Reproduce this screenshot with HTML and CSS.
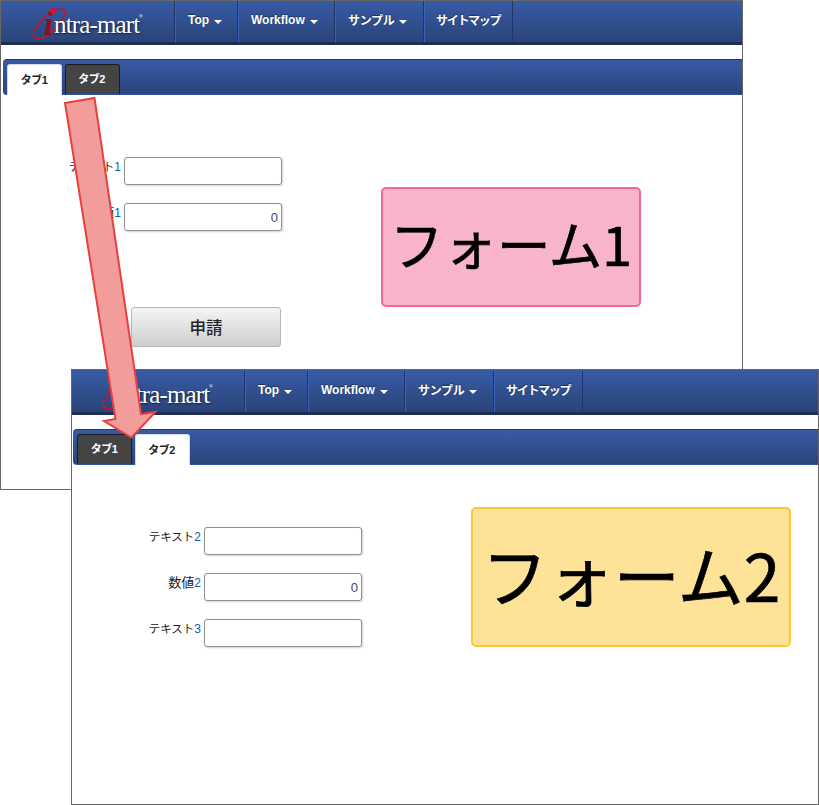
FILE: index.html
```html
<!DOCTYPE html>
<html lang="ja">
<head>
<meta charset="utf-8">
<title>タブ</title>
<link rel="stylesheet" href="styles.css">
</head>
<body>
<main class="canvas">
  <section class="window window-one">
    <header class="navbar">
      <div class="brand">
        <svg class="brand-mark" viewBox="0 0 40 40" aria-hidden="true">
          <ellipse cx="20" cy="22" rx="8" ry="20" transform="rotate(47 20 22)" fill="none" stroke="#c2162a" stroke-width="1.5"/>
          <text x="15" y="33" class="brand-i">i</text>
          <circle cx="24" cy="9" r="3" fill="#d8132a"/>
        </svg>
        <span class="brand-text">ntra-mart</span><sup class="brand-reg">®</sup>
      </div>
      <nav class="menu">
        <a class="menu-item">Top<i class="caret"></i></a>
        <a class="menu-item">Workflow<i class="caret"></i></a>
        <a class="menu-item">サンプル<i class="caret"></i></a>
        <a class="menu-item">サイトマップ</a>
      </nav>
    </header>
    <div class="tabbar">
      <a class="tab tab-active">タブ1</a>
      <a class="tab tab-dark">タブ2</a>
    </div>
    <div class="content">
      <form class="fields">
        <label class="field-label">テキスト<span class="digit">1</span></label>
        <input class="input" type="text">
        <label class="field-label field-label-kanji">数値<span class="digit">1</span></label>
        <input class="input input-num" type="text" value="0">
        <button class="submit" type="button">申請</button>
      </form>
      <div class="card card-pink">フォーム1</div>
    </div>
  </section>

  <section class="window window-two">
    <header class="navbar">
      <div class="brand">
        <svg class="brand-mark" viewBox="0 0 40 40" aria-hidden="true">
          <ellipse cx="20" cy="22" rx="8" ry="20" transform="rotate(47 20 22)" fill="none" stroke="#c2162a" stroke-width="1.5"/>
          <text x="15" y="33" class="brand-i">i</text>
          <circle cx="24" cy="9" r="3" fill="#d8132a"/>
        </svg>
        <span class="brand-text">ntra-mart</span><sup class="brand-reg">®</sup>
      </div>
      <nav class="menu">
        <a class="menu-item">Top<i class="caret"></i></a>
        <a class="menu-item">Workflow<i class="caret"></i></a>
        <a class="menu-item">サンプル<i class="caret"></i></a>
        <a class="menu-item">サイトマップ</a>
      </nav>
    </header>
    <div class="tabbar">
      <a class="tab tab-dark">タブ1</a>
      <a class="tab tab-active">タブ2</a>
    </div>
    <div class="content">
      <form class="fields">
        <label class="field-label">テキスト<span class="digit">2</span></label>
        <input class="input" type="text">
        <label class="field-label field-label-kanji">数値<span class="digit">2</span></label>
        <input class="input input-num" type="text" value="0">
        <label class="field-label">テキスト<span class="digit">3</span></label>
        <input class="input" type="text">
      </form>
      <div class="card card-yellow">フォーム2</div>
    </div>
  </section>

  <svg class="arrow" viewBox="0 0 819 805" aria-hidden="true">
    <polygon points="65,103 94.500,98 141,414 155.500,412 131.500,437.500 104,421 115.500,419" fill="#f29c9b" stroke="#e8403e" stroke-width="2" stroke-linejoin="miter"/>
  </svg>
</main>
</body>
</html>
```
FILE: styles.css
```css
* { box-sizing: border-box; }
html, body { margin: 0; padding: 0; background: #fff; }
.canvas {
  position: relative;
  width: 819px;
  height: 805px;
  overflow: hidden;
  font-family: "Noto Sans CJK JP", "Liberation Sans", sans-serif;
  color: #222;
}
.window {
  position: absolute;
  background: #fff;
  border: 1px solid #666;
  display: flex;
  flex-direction: column;
}
.window-one { left: 0; top: 0; width: 743px; height: 490px; }
.window-two { left: 71px; top: 369px; width: 748px; height: 436px; }

.navbar {
  display: flex;
  height: 44px;
  flex: none;
  background: linear-gradient(#375ba6, #2b4479);
  border-bottom: 3px solid #1f2e55;
}
.window-two .navbar { height: 45px; padding-top: 1px; }
.brand {
  width: 173px;
  flex: none;
  display: flex;
  align-items: center;
  padding-left: 28px;
}
.window-two .brand { width: 172px; padding-left: 27px; }
.brand-mark { width: 40px; height: 40px; flex: none; margin-right: -15px; }
.brand-i { font: italic 700 34px "Liberation Serif", serif; fill: #8e1020; }
.brand-text {
  font: 25px/1 "Liberation Serif", serif;
  color: #fff;
  letter-spacing: -.85px;
  text-shadow: 1px 1px 2px rgba(0,0,0,.6);
  margin-top: 5px;
}
.brand-reg { font-size: 7px; line-height: 1; color: #dfe4ef; align-self: flex-start; margin-top: 13px; }

.menu { display: flex; }
.menu-item {
  display: flex;
  align-items: center;
  padding: 0 0 4px 13px;
  font: 700 12px "Liberation Sans", "Noto Sans CJK JP", sans-serif;
  color: #fff;
  text-shadow: 0 -1px 1px rgba(0,0,0,.45);
  border-left: 1px solid #1f3468;
  box-shadow: inset 1px 0 0 #3a62b8;
}
.menu-item:nth-child(1) { width: 63px; }
.menu-item:nth-child(2) { width: 97px; }
.menu-item:nth-child(3) { width: 89px; letter-spacing: -.3px; }
.menu-item:nth-child(4) { width: 90px; padding-left: 12px; letter-spacing: -1.300px; border-right: 1px solid #1f3468; }
.caret {
  width: 0;
  height: 0;
  margin: 4px 0 0 5px;
  border-top: 4px solid #fff;
  border-left: 4px solid transparent;
  border-right: 4px solid transparent;
}

.tabbar {
  display: flex;
  align-items: flex-end;
  gap: 2.500px;
  height: 36px;
  flex: none;
  margin: 14px 0 0 2px;
  padding: 0 0 0 4px;
  background: linear-gradient(#375ba6, #2b4479);
  border-top: 1px solid #24396f;
  border-bottom: 1px solid #2f56a4;
  border-radius: 4px 0 0 4px;
}
.window-two .tabbar { margin-left: 1px; }
.tab {
  display: flex;
  align-items: center;
  justify-content: center;
  width: 55px;
  height: 30px;
  font: 700 11px "Liberation Sans", "Noto Sans CJK JP", sans-serif;
  letter-spacing: -.5px;
  border-radius: 3px 3px 0 0;
  padding: 0 1px 3px 0;
}
.tab-active { background: #fff; color: #222; border: 1px solid #d5d9e2; border-bottom: 0; margin-bottom: -1px; height: 31px; }
.tab-dark { background: #444; color: #fff; border: 1px solid #1c1c1c; border-bottom: 0; }

.content { display: flex; align-items: flex-start; flex: 1; }
.fields {
  display: grid;
  grid-template-columns: 120px 158px;
  column-gap: 3px;
  row-gap: 18px;
  padding-top: 62px;
  flex: none;
}
.window-two .fields { grid-template-columns: 129px 158px; }
.field-label {
  text-align: right;
  font-size: 11.500px;
  line-height: 18px;
  color: #1c1c1c;
}
.field-label-kanji { font-size: 13px; }
.digit { color: #0b5ea8; font-family: "Liberation Sans", sans-serif; font-size: 12px; }
.input {
  height: 28px;
  width: 158px;
  border: 1px solid #8f8f8f;
  border-radius: 3px;
  background: #fff;
  box-shadow: 1px 1px 2px rgba(0,0,0,.18);
  padding: 0 3px;
  font: 13px "Liberation Sans", sans-serif;
  color: #3a4a66;
  outline: none;
}
.input-num { text-align: right; }
.submit {
  grid-column: 2;
  justify-self: start;
  width: 150px;
  height: 40px;
  margin: 58px 0 0 7px;
  border: 1px solid #b5b5b5;
  border-radius: 3px;
  background: linear-gradient(#f4f4f4, #cfcfcf);
  font: 500 16.500px "Noto Sans CJK JP", sans-serif;
  color: #222;
  padding: 0;
}
.card {
  display: flex;
  align-items: center;
  justify-content: center;
  border-radius: 5px;
  border-width: 2px;
  border-style: solid;
  color: #000;
  line-height: 1;
  flex: none;
  -webkit-text-stroke: .7px #000;
  padding-bottom: 8px;
}
.card-pink {
  width: 260px;
  height: 120px;
  margin: 92px 0 0 99px;
  background: #f8b4cc;
  border-color: #f06a94;
  font-size: 53.500px;
}
.card-yellow {
  width: 320px;
  height: 140px;
  margin: 42px 0 0 109px;
  background: #fee298;
  border-color: #fdc832;
  font-size: 66px;
}
.arrow {
  position: absolute;
  left: 0;
  top: 0;
  width: 819px;
  height: 805px;
  pointer-events: none;
}
```
